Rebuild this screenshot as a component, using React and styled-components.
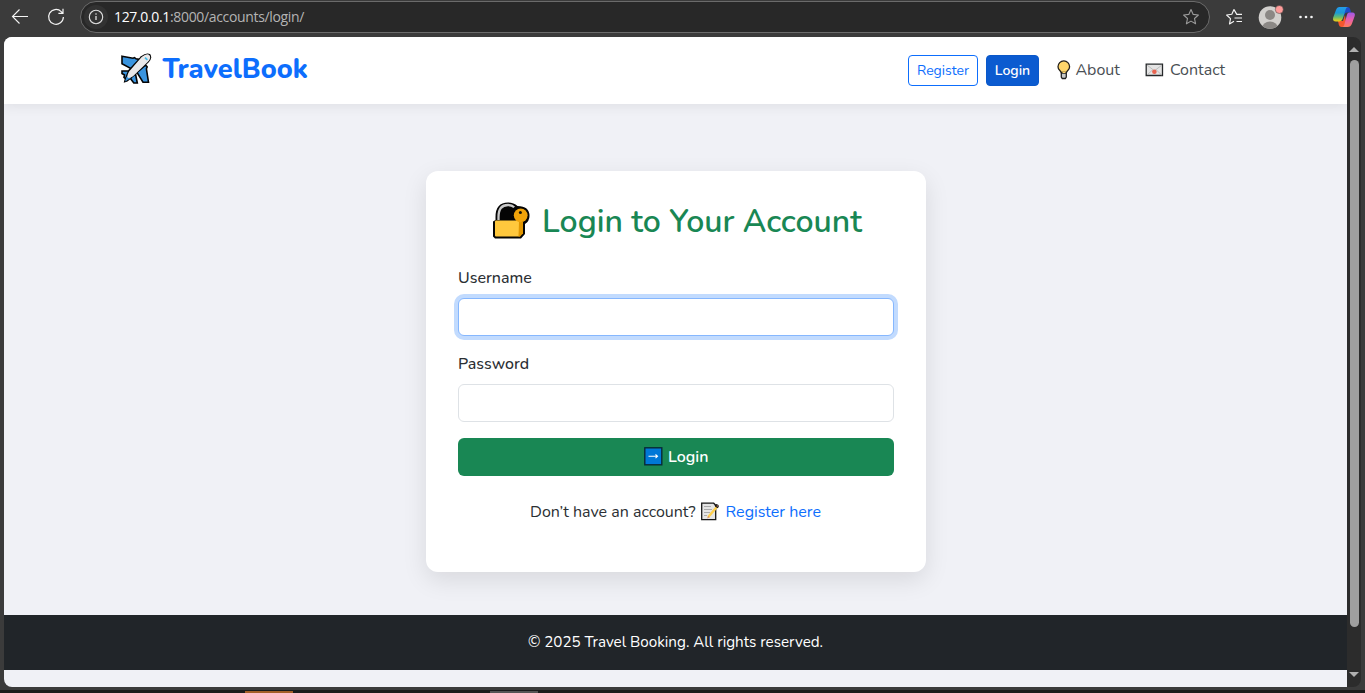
import React from "react";
import styled, { createGlobalStyle, css } from "styled-components";

const GlobalStyle = createGlobalStyle`
  *, *::before, *::after { box-sizing: border-box; }
  body {
    margin: 0;
    overflow: hidden;
    background: #3b3b3b;
    font-family: Nunito, Lato, "Liberation Sans", sans-serif;
    font-size: 16px;
    line-height: 1.5;
    color: #2b2f33;
  }
`;

const Window = styled.div`
  display: flex;
  flex-direction: column;
  width: 1365px;
  height: 693px;
  background: #3b3b3b;
`;

/* Browser toolbar */
const Toolbar = styled.header`
  display: flex;
  align-items: center;
  height: 37px;
  padding: 0 8px 3px 10px;
  flex: none;
`;

const ToolIcon = styled.span`
  display: flex;
  flex: none;
  margin-left: ${(p) => p.$gap || 0}px;
  svg { display: block; }
`;

const AddressBar = styled.div`
  display: flex;
  align-items: center;
  width: 1130px;
  height: 32px;
  margin-left: 15px;
  padding: 0 9px 0 3px;
  flex: none;
  border: 1px solid #6b6b6b;
  border-radius: 16px;
  background: #282828;
`;

const InfoBadge = styled.span`
  display: grid;
  place-items: center;
  width: 24px;
  height: 24px;
  border-radius: 50%;
  background: #323232;
`;

const Url = styled.span`
  flex: 1;
  margin-left: 6px;
  font: 14px/20px "Open Sans", "Noto Sans", sans-serif;
  letter-spacing: -0.34px;
  color: #b4b4b4;
  b { font-weight: 400; color: #fff; }
`;

/* Page area */
const Viewport = styled.div`
  display: flex;
  height: 650px;
  margin: 0 4px;
  flex: none;
  overflow: hidden;
  border-radius: 8px;
  background: #2c2c2c;
`;

const Page = styled.div`
  display: flex;
  flex-direction: column;
  width: 1343px;
  background: #f0f1f6;
`;

const Navbar = styled.nav`
  display: flex;
  align-items: center;
  justify-content: space-between;
  height: 67px;
  padding: 0 121.800px 0 116px;
  flex: none;
  background: #fff;
  box-shadow: 0 2px 12px rgba(0, 0, 0, 0.08);
`;

const Brand = styled.a`
  display: flex;
  align-items: center;
  gap: 10.5px;
  color: #0d6efd;
  svg { display: block; margin-top: -4px; }
`;

const BrandName = styled.span`
  margin-top: -2px;
  font-size: 27.2px;
  font-weight: 800;
  line-height: 36px;
`;

const NavLinks = styled.div`
  display: flex;
  align-items: center;
`;

const NavButton = styled.a`
  display: flex;
  align-items: center;
  justify-content: center;
  width: ${(p) => p.$width}px;
  height: 31px;
  margin-right: 8px;
  border: 1px solid #0d6efd;
  border-radius: 4px;
  font-size: 14px;
  color: #0d6efd;
  ${(p) => p.$active && css`
    border-color: #0a58ca;
    background: #0b5bd0;
    color: #fff;
    font-weight: 600;
  `}
`;

const NavLink = styled.a`
  display: flex;
  align-items: center;
  height: 24px;
  margin: -2px 0 0 ${(p) => p.$gap}px;
  gap: ${(p) => p.$iconGap}px;
  color: #4a4f54;
  svg { display: block; }
`;

const Main = styled.main`
  display: flex;
  justify-content: center;
  height: 511px;
  padding-top: 67px;
  flex: none;
`;

const Card = styled.form`
  display: flex;
  flex-direction: column;
  width: 500px;
  height: 401px;
  margin-left: 1px;
  padding: 32px;
  border-radius: 12px;
  background: #fff;
  box-shadow: 0 8px 24px rgba(0, 0, 0, 0.1);
`;

const Heading = styled.h2`
  display: flex;
  align-items: center;
  justify-content: center;
  gap: 12px;
  height: 38px;
  margin: 0 0 25px;
  padding-left: 2px;
  font-size: 32px;
  font-weight: 600;
  line-height: 38px;
  color: #198754;
  svg { display: block; margin-top: -4px; }
`;

const Field = styled.div`
  margin-bottom: 16px;
`;

const Label = styled.label`
  display: block;
  height: 24px;
  margin-bottom: 8px;
  font-weight: 500;
`;

const Input = styled.input`
  display: block;
  width: 436px;
  height: 38px;
  padding: 6px 12px;
  border: 1px solid ${(p) => (p.$focused ? "#86b7fe" : "#dee2e6")};
  border-radius: 6px;
  outline: none;
  background: #fff;
  font: inherit;
  caret-color: transparent;
  box-shadow: ${(p) => (p.$focused ? "0 0 0 4px #c2dbfe" : "none")};
`;

const Submit = styled.button`
  display: flex;
  align-items: center;
  justify-content: center;
  gap: 5.5px;
  width: 436px;
  height: 38px;
  padding: 0;
  border: 0;
  border-radius: 6px;
  background: #198754;
  color: #fff;
  font: inherit;
  font-weight: 600;
  svg { display: block; margin-top: -1px; }
`;

const Prompt = styled.p`
  display: flex;
  align-items: center;
  justify-content: center;
  height: 24px;
  margin: 24px 0 0;
  padding-right: 1px;
  svg { display: block; margin: 0 6px 0 4px; }
`;

const PromptLink = styled.a`
  color: #0d6efd;
`;

const Footer = styled.footer`
  display: grid;
  place-items: center;
  height: 55px;
  padding-bottom: 1px;
  flex: none;
  background: #212529;
  color: #fff;
  font-size: 15.2px;
`;

const Scrollbar = styled.div`
  display: flex;
  flex-direction: column;
  align-items: center;
  width: 14px;
  padding: 10px 0 9px;
  svg { display: block; flex: none; }
`;

const Thumb = styled.div`
  width: 9px;
  height: 567px;
  margin: 8px 0 45px;
  border-radius: 5px;
  background: #9f9f9f;
`;

const Taskbar = styled.div`
  display: flex;
  height: 3px;
  margin-top: 3px;
  padding-left: 245px;
  gap: 197px;
  background: #1b1c1c;
`;

const TaskMark = styled.span`
  width: 48px;
  height: 2px;
  margin-top: 1px;
  background: ${(p) => p.$color};
`;

const BackIcon = () => (
  <svg width="20" height="20" viewBox="0 0 20 20" fill="none" stroke="#f4f4f4" strokeWidth="1.1">
    <path d="M18 9.5H2.5M9.5 2.5l-7 7 7 7" />
  </svg>
);

const ReloadIcon = () => (
  <svg width="18" height="18" viewBox="0 0 18 18" fill="none" stroke="#f4f4f4" strokeWidth="1.2">
    <path d="M16.4 9A7.4 7.4 0 1 1 14.2 3.6L15.5 5M16 .8V5.3H11.4" />
  </svg>
);

const InfoIcon = () => (
  <svg width="16" height="16" viewBox="0 0 16 16" fill="none" stroke="#dedede">
    <circle cx="8" cy="8" r="6.7" strokeWidth="1.1" />
    <path d="M8 7v4" strokeWidth="1.3" />
    <circle cx="8" cy="5" r=".8" fill="#dedede" stroke="none" />
  </svg>
);

const StarIcon = () => (
  <svg width="18" height="18" viewBox="0 0 18 18" fill="none" stroke="#9b9b9b" strokeWidth="1.1" strokeLinejoin="round">
    <path d="M9 1.6l2.2 4.8 5.2.6-3.9 3.5 1.1 5.3L9 13.1l-4.6 2.7 1.1-5.3L1.6 7l5.2-.6z" />
  </svg>
);

const FavoritesIcon = () => (
  <svg width="18" height="18" viewBox="0 0 18 18" fill="none" stroke="#f4f4f4" strokeWidth="1.15" strokeLinejoin="round">
    <path d="M17 6.4h-5.2L9 1.6 6.8 6.2 1.6 7l3.9 3.6-1 5.3L9 13.3M9.5 10H17M11.5 13.5H17" />
  </svg>
);

const AvatarIcon = () => (
  <svg width="26" height="26" viewBox="0 0 26 26">
    <defs>
      <clipPath id="avatar"><circle cx="12" cy="13.5" r="11.3" /></clipPath>
    </defs>
    <g clipPath="url(#avatar)">
      <path fill="#d2d0cd" d="M0 0h26v26H0z" />
      <circle cx="12" cy="11" r="5" fill="#8b8885" />
      <ellipse cx="12" cy="24" rx="8" ry="6.5" fill="#8b8885" />
    </g>
    <circle cx="21.3" cy="5.5" r="4" fill="#ff9c9a" stroke="#3b3b3b" strokeWidth=".5" />
  </svg>
);

const MoreIcon = () => (
  <svg width="16" height="4" viewBox="0 0 16 4" fill="#f4f4f4">
    <circle cx="2.5" cy="2" r="1.3" />
    <circle cx="8" cy="2" r="1.3" />
    <circle cx="13.5" cy="2" r="1.3" />
  </svg>
);

const CopilotIcon = () => (
  <svg width="24" height="24" viewBox="0 0 24 24">
    <defs>
      <linearGradient id="cpLeft" x1="0" y1="0" x2="0" y2="1">
        <stop offset="0" stopColor="#249bea" />
        <stop offset=".4" stopColor="#1a98d5" />
        <stop offset=".7" stopColor="#63bb70" />
        <stop offset="1" stopColor="#f4ce12" />
      </linearGradient>
      <linearGradient id="cpRight" x1="0" y1="0" x2="0" y2="1">
        <stop offset="0" stopColor="#9c58e8" />
        <stop offset=".5" stopColor="#e95fac" />
        <stop offset="1" stopColor="#ff7c5b" />
      </linearGradient>
    </defs>
    <path fill="#1b4bc9" d="M12 2h3.5q2 0 2.6 2l1 3.5h-4q-2 0-2.6 2L11 13z" />
    <path fill="#f4572d" d="M6 16h5l2-6 1 7-1 3q-.7 2-2.7 2H9.4q-2 0-2.5-2z" />
    <path fill="url(#cpLeft)" d="M7.5 2H16q-1.500 0-2.200 2l-3.200 10q-.8 2.400-3.200 2.400H4Q.2 16.400 1.200 12.500L4 5q1-3 3.500-3z" />
    <path fill="url(#cpRight)" d="M17 7.500h3.400q3.200 0 2.300 3.600L20 18.500Q18.800 22 15.500 22H9.500q2 0 2.700-2l2.700-10q.5-2.500 2.100-2.500z" />
  </svg>
);

const PlaneIcon = () => (
  <svg width="32" height="32" viewBox="0 0 32 32" strokeLinejoin="miter">
    <g fill="#3994df" stroke="#050505" strokeWidth="1.600">
      <path d="M2 3.300l11 1.900 1.500-.6 1.500 1.200 3.500.6-.5 6-6.500 4L2 10.700z" />
      <path d="M24.500 13l1.500-.6 1.200 1.400-.8 2L28.500 29.200h-5.500L17 19.500z" />
      <path d="M2 18h8l1 4-5 4-2-1.500.5-2.500L2 20.500z" />
      <path d="M11 23l4.500-2 1.800 9h-3.500l-3-4z" />
    </g>
    <path fill="#050505" d="M21 3.300q5.500-4.300 9.300-2 2.500 4-2 8.500L12.500 24.500l-5 3.900-3.800 1.400 1-4L8.300 17z" />
    <path fill="#3994df" d="M10 19.500l-3.700 5-1.200 4 5.700-3.500z" />
    <path fill="#e9e8e9" d="M21.700 4q5.300-4.100 7.700-1.800 2.200 3-1.700 6.700L13 23.200q-3.800 2.700-5.300 1.400-1-2 1.400-6z" />
    <path d="M25 4.700l2.400 2.200" stroke="#43bdeb" strokeWidth="1.600" />
  </svg>
);

const BulbIcon = () => (
  <svg width="16" height="20" viewBox="0 0 16 20">
    <path fill="#ffd66b" stroke="#25211b" strokeWidth="1.300" d="M5.200 12.500C4.600 10.500 2 10 2 6.700a5.800 5.800 0 0 1 11.600 0c0 3.300-2.600 3.800-3.200 5.800z" />
    <path fill="#c7c9c9" stroke="#222" strokeWidth="1.300" d="M5.300 13h5v4l-1 1.500h-3l-1-1.500z" />
    <path d="M6.500 12.500h3" stroke="#ffd66b" strokeWidth="1.200" />
  </svg>
);

const LetterIcon = () => (
  <svg width="19" height="14" viewBox="0 0 19 14">
    <path fill="#e4e4e4" stroke="#25282a" strokeWidth="1.300" d="M1.200 1.200h16.300v11.300H1.200z" />
    <path d="M2 2l7.400 5.800L17 2M2 12l5.500-5M16.700 12l-5.300-5" fill="none" stroke="#b2b2b2" strokeWidth=".8" />
    <circle cx="9.400" cy="8.800" r="2.300" fill="#e96450" />
  </svg>
);

const LockIcon = () => (
  <svg width="38" height="38" viewBox="0 0 38 38">
    <path fill="#050505" d="M3.500 19V16Q3.500 1.500 16 1.500 22 1.500 25.500 5 37.500 5 37.500 15q0 5-4.500 8v10l-4 4.500H3L1 35.500V20.500z" />
    <path fill="none" stroke="#c8c8c8" strokeWidth="2.300" d="M6.500 19v-3Q6.500 4 16 4q4 0 6.200 2.300" />
    <rect x="3" y="19.500" width="25.500" height="16" rx="1" fill="#ffc83d" />
    <path fill="#e19600" d="M27 21h4v11.500l-3 3h-1.500z" />
    <circle cx="28.700" cy="14.300" r="6.900" fill="#f0a30a" />
    <circle cx="28.400" cy="11.500" r="1.500" fill="#17130a" />
  </svg>
);

const ArrowIcon = () => (
  <svg width="19" height="19" viewBox="0 0 19 19">
    <rect x=".8" y=".8" width="17" height="17" fill="#0078d7" stroke="#082b38" strokeWidth="1.400" />
    <path fill="none" stroke="#fff" strokeWidth="1.100" d="M4.500 9.300h9M11.500 7.500l2 1.800-2 1.800" />
  </svg>
);

const MemoIcon = () => (
  <svg width="20" height="20" viewBox="0 0 20 20">
    <path fill="#e5e5e5" stroke="#171717" strokeWidth="1.300" d="M1.700 1.200h12l2 2v14.500h-14z" />
    <path d="M4 4.500h7M4 7.500h8M4 10.500h6M4 13.500h3" stroke="#aaa" />
    <path d="M17.400 4.300L8.200 15" stroke="#ffd04d" strokeWidth="2.400" />
    <path d="M7 16.400l1.200-2.400 1.500 1.200z" fill="#db8e65" />
    <path d="M14.500 3.400l2-1.300 2 .8.300 2-1.500 1.400z" fill="#111" />
    <circle cx="17.300" cy="4" r=".8" fill="#b87967" />
  </svg>
);

export default function App() {
  return (
    <Window>
      <GlobalStyle />
      <Toolbar>
        <ToolIcon><BackIcon /></ToolIcon>
        <ToolIcon $gap={17}><ReloadIcon /></ToolIcon>
        <AddressBar>
          <InfoBadge><InfoIcon /></InfoBadge>
          <Url><b>127.0.0.1</b>:8000/accounts/login/</Url>
          <StarIcon />
        </AddressBar>
        <ToolIcon $gap={15}><FavoritesIcon /></ToolIcon>
        <ToolIcon $gap={15}><AvatarIcon /></ToolIcon>
        <ToolIcon $gap={14}><MoreIcon /></ToolIcon>
        <ToolIcon $gap={18}><CopilotIcon /></ToolIcon>
      </Toolbar>
      <Viewport>
        <Page>
          <Navbar>
            <Brand><PlaneIcon /><BrandName>TravelBook</BrandName></Brand>
            <NavLinks>
              <NavButton $width={70}>Register</NavButton>
              <NavButton $width={53} $active>Login</NavButton>
              <NavLink $gap={8.7} $iconGap={3.8}><BulbIcon />About</NavLink>
              <NavLink $gap={25} $iconGap={6}><LetterIcon />Contact</NavLink>
            </NavLinks>
          </Navbar>
          <Main>
            <Card>
              <Heading><LockIcon />Login to Your Account</Heading>
              <Field>
                <Label>Username</Label>
                <Input $focused />
              </Field>
              <Field>
                <Label>Password</Label>
                <Input type="password" />
              </Field>
              <Submit type="button"><ArrowIcon />Login</Submit>
              <Prompt>
                <span>Don’t have an account?</span>
                <MemoIcon />
                <PromptLink>Register here</PromptLink>
              </Prompt>
            </Card>
          </Main>
          <Footer>© 2025 Travel Booking. All rights reserved.</Footer>
        </Page>
        <Scrollbar>
          <svg width="10" height="5" viewBox="0 0 10 5"><path fill="#b0b0b0" d="M5 0l5 5H0z" /></svg>
          <Thumb />
          <svg width="10" height="5" viewBox="0 0 10 5"><path fill="#b0b0b0" d="M0 0h10L5 5z" /></svg>
        </Scrollbar>
      </Viewport>
      <Taskbar>
        <TaskMark $color="#a45f28" />
        <TaskMark $color="#555" />
      </Taskbar>
    </Window>
  );
}
